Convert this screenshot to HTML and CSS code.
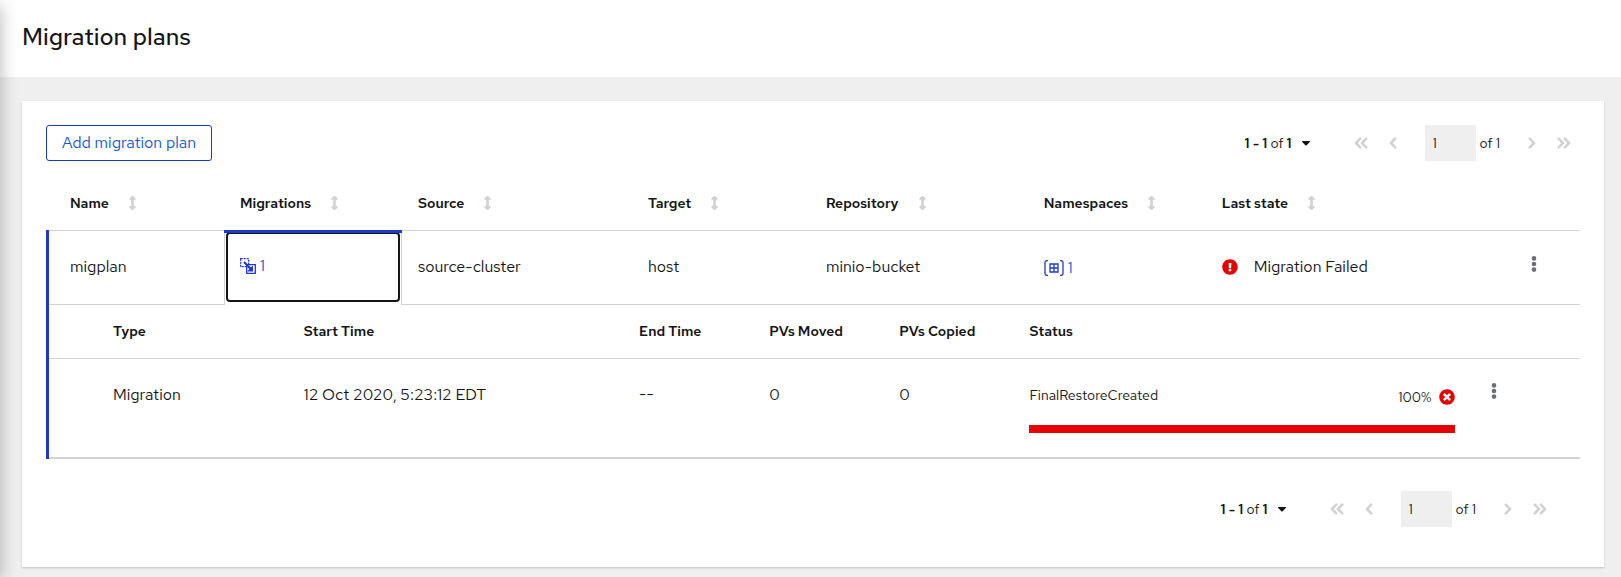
FILE: index.html
```html
<!DOCTYPE html>
<html lang="en">
<head>
<meta charset="utf-8">
<title>Migration plans</title>
<link rel="stylesheet" href="styles.css">
</head>
<body>
<svg class="defs" aria-hidden="true">
  <symbol id="sort" viewBox="0 0 256 512"><path d="M214.059 377.941H168V134.059h46.059c21.382 0 32.09-25.851 16.971-40.971L144.97 7.029c-9.373-9.373-24.568-9.373-33.941 0L24.971 93.088c-15.119 15.119-4.411 40.971 16.971 40.971H88v243.882H41.941c-21.382 0-32.09 25.851-16.971 40.971l86.059 86.059c9.373 9.373 24.568 9.373 33.941 0l86.059-86.059c15.12-15.119 4.412-40.971-16.97-40.971z"/></symbol>
  <symbol id="kebab" viewBox="0 0 6 16"><circle cx="3" cy="2.4" r="2.3"/><circle cx="3" cy="8" r="2.3"/><circle cx="3" cy="13.6" r="2.3"/></symbol>
  <symbol id="left" viewBox="0 0 8 12"><path class="stroke" d="M6.2 1.6 2 6l4.200 4.400"/></symbol>
  <symbol id="right" viewBox="0 0 8 12"><path class="stroke" d="M1.800 1.600 6 6l-4.200 4.400"/></symbol>
  <symbol id="first" viewBox="0 0 14 12"><path class="stroke" d="M6.200 1.600 2 6l4.200 4.400M12.200 1.600 8 6l4.200 4.400"/></symbol>
  <symbol id="last" viewBox="0 0 14 12"><path class="stroke" d="M1.800 1.600 6 6l-4.200 4.400M7.800 1.600 12 6l-4.200 4.400"/></symbol>
  <symbol id="caret" viewBox="0 0 8 5"><path d="M.6 0h6.800c.5 0 .8.600.4 1L4.400 4.600c-.2.200-.600.200-.8 0L.2 1c-.4-.4-.1-1 .4-1z"/></symbol>
</svg>

<header class="page-header"><h1>Migration plans</h1></header>

<main class="page-main">
  <section class="card">
    <div class="toolbar">
      <button class="add-button" type="button">Add migration plan</button>
      <nav class="pagination" aria-label="Top pagination">
        <button class="range" type="button"><span><b>1 - 1</b> of <b>1</b></span><svg class="caret"><use href="#caret"/></svg></button>
        <button class="nav-button wide" type="button" disabled aria-label="First page"><svg class="double"><use href="#first"/></svg></button>
        <button class="nav-button" type="button" disabled aria-label="Previous page"><svg class="single"><use href="#left"/></svg></button>
        <label class="page-field"><input type="text" value="1" aria-label="Current page"><span>of 1</span></label>
        <button class="nav-button" type="button" disabled aria-label="Next page"><svg class="single"><use href="#right"/></svg></button>
        <button class="nav-button wide" type="button" disabled aria-label="Last page"><svg class="double"><use href="#last"/></svg></button>
      </nav>
    </div>

    <table class="plans">
      <colgroup><col class="c-std"><col class="c-std"><col class="c-source"><col class="c-std"><col class="c-repo"><col class="c-std"><col><col class="c-action"></colgroup>
      <thead>
        <tr>
          <th><button type="button">Name<svg class="sort"><use href="#sort"/></svg></button></th>
          <th><button type="button">Migrations<svg class="sort"><use href="#sort"/></svg></button></th>
          <th><button type="button">Source<svg class="sort"><use href="#sort"/></svg></button></th>
          <th><button type="button">Target<svg class="sort"><use href="#sort"/></svg></button></th>
          <th><button type="button">Repository<svg class="sort"><use href="#sort"/></svg></button></th>
          <th><button type="button">Namespaces<svg class="sort"><use href="#sort"/></svg></button></th>
          <th><button type="button">Last state<svg class="sort"><use href="#sort"/></svg></button></th>
          <td></td>
        </tr>
      </thead>
      <tbody>
        <tr class="plan">
          <td class="accent">migplan</td>
          <td class="open">
            <button class="count focused" type="button">
              <svg class="icon" viewBox="0 0 16 16"><path class="line" stroke-dasharray="2 1" d="M.7.7h8v8h-8z"/><path class="cover" d="M6.700 6.700h8.600v8.600H6.700z"/><path d="M3.300 4.700 4.700 3.300l6 6L13 7.800v5.700H7.300l2-2.500z"/></svg><span>1</span>
            </button>
          </td>
          <td>source-cluster</td>
          <td>host</td>
          <td>minio-bucket</td>
          <td class="namespaces">
            <a class="count" href="#namespaces">
              <svg class="icon namespace" viewBox="0 0 20 16"><path class="line" d="M4 .7H3Q1 .7 1 3v10q0 2.300 2 2.300h1M16 .7h1q2 0 2 2.300v10q0 2.300-2 2.300h-1M6 4h8v8H6zM10 4v8M6 8h8"/></svg><span>1</span>
            </a>
          </td>
          <td>
            <span class="state"><svg class="icon danger" viewBox="0 0 512 512"><path d="M504 256c0 136.997-111.043 248-248 248S8 392.997 8 256C8 119.083 119.043 8 256 8s248 111.083 248 248zm-248 50c-25.405 0-46 20.595-46 46s20.595 46 46 46 46-20.595 46-46-20.595-46-46-46zm-43.673-165.346l7.418 136c.347 6.364 5.609 11.346 11.982 11.346h48.546c6.373 0 11.635-4.982 11.982-11.346l7.418-136c.375-6.874-5.098-12.654-11.982-12.654h-63.383c-6.884 0-12.356 5.780-11.981 12.654z"/></svg>Migration Failed</span>
          </td>
          <td class="action"><button class="kebab" type="button" aria-label="Plan actions"><svg><use href="#kebab"/></svg></button></td>
        </tr>
        <tr>
          <td class="details accent" colspan="8">
            <table class="history">
              <colgroup><col class="h-type"><col class="h-start"><col class="h-num"><col class="h-num"><col class="h-num"><col class="h-status"><col></colgroup>
              <thead><tr><th>Type</th><th>Start Time</th><th>End Time</th><th>PVs Moved</th><th>PVs Copied</th><th>Status</th><td></td></tr></thead>
              <tbody>
                <tr>
                  <td>Migration</td>
                  <td>12 Oct 2020, 5:23:12 EDT</td>
                  <td>--</td>
                  <td>0</td>
                  <td>0</td>
                  <td>
                    <div class="progress">
                      <div class="progress-head">
                        <span id="step">FinalRestoreCreated</span>
                        <span class="measure">100%<svg class="icon danger" viewBox="0 0 512 512"><path d="M256 8C119 8 8 119 8 256s111 248 248 248 248-111 248-248S393 8 256 8zm121.600 313.100c4.700 4.700 4.700 12.300 0 17L338 377.600c-4.700 4.700-12.300 4.700-17 0L256 312l-65.100 65.600c-4.700 4.700-12.300 4.700-17 0L134.400 338c-4.700-4.700-4.700-12.300 0-17l65.600-65-65.600-65.100c-4.700-4.700-4.700-12.300 0-17l39.600-39.600c4.700-4.700 12.300-4.700 17 0l65 65.700 65.100-65.600c4.700-4.700 12.300-4.700 17 0l39.600 39.600c4.700 4.700 4.700 12.300 0 17L312 256l65.600 65.100z"/></svg></span>
                      </div>
                      <div class="track" role="progressbar" aria-labelledby="step" aria-valuenow="100" aria-valuemin="0" aria-valuemax="100"><div class="fill" style="width: 100%"></div></div>
                    </div>
                  </td>
                  <td class="history-action"><button class="kebab" type="button" aria-label="Migration actions"><svg><use href="#kebab"/></svg></button></td>
                </tr>
              </tbody>
            </table>
          </td>
        </tr>
      </tbody>
    </table>

    <div class="footer">
      <nav class="pagination" aria-label="Bottom pagination">
        <button class="range" type="button"><span><b>1 - 1</b> of <b>1</b></span><svg class="caret"><use href="#caret"/></svg></button>
        <button class="nav-button wide" type="button" disabled aria-label="First page"><svg class="double"><use href="#first"/></svg></button>
        <button class="nav-button" type="button" disabled aria-label="Previous page"><svg class="single"><use href="#left"/></svg></button>
        <label class="page-field"><input type="text" value="1" aria-label="Current page"><span>of 1</span></label>
        <button class="nav-button" type="button" disabled aria-label="Next page"><svg class="single"><use href="#right"/></svg></button>
        <button class="nav-button wide" type="button" disabled aria-label="Last page"><svg class="double"><use href="#last"/></svg></button>
      </nav>
    </div>
  </section>
</main>
</body>
</html>
```

FILE: styles.css
```css
:root {
  --text: #151515;
  --blue: #1f38cc;
  --link: #1257d6;
  --line: #d2d2d2;
  --muted: #d2d2d2;
  --surface: #efefef;
  --danger: #e60000;
}

* { box-sizing: border-box; }

body {
  position: relative;
  margin: 0;
  min-height: 100vh;
  overflow-x: hidden;
  background: var(--surface);
  color: var(--text);
  font: 16px/24px "Red Hat Text", Lato, "Open Sans", sans-serif;
}

/* Shadow cast by the sidebar over the left edge */
body::before {
  content: "";
  position: absolute;
  z-index: 1;
  top: 8px;
  bottom: 0;
  left: -16px;
  width: 16px;
  box-shadow: 0 0 16px 2px rgba(3, 3, 3, 0.24);
}

button, input { font: inherit; color: inherit; }
button { padding: 0; border: 0; background: none; }
svg { display: block; flex: none; fill: currentColor; }
b { font-weight: 600; }
.defs { position: absolute; width: 0; height: 0; }
.stroke { fill: none; stroke: currentColor; stroke-width: 2.6; stroke-linecap: round; stroke-linejoin: round; }
.line { fill: none; stroke: currentColor; stroke-width: 1.3; }
.cover { fill: #fff; stroke: currentColor; stroke-width: 1.3; }

.page-header { padding: 20px 22px 24px; background: #fff; }
h1 { margin: 0; font-size: 24px; line-height: 33px; font-weight: 500; }

.page-main { padding: 24px 17px 10px 22px; }
.card {
  padding: 24px 24px 40px;
  background: #fff;
  box-shadow: 0 1px 2px rgba(3, 3, 3, 0.2);
}

.toolbar { display: flex; justify-content: space-between; align-items: center; margin-bottom: 16px; }
.add-button {
  padding: 5px 15px;
  border: 1px solid var(--blue);
  border-radius: 3px;
  color: var(--link);
}

.pagination { display: flex; align-items: center; gap: 4px; font-size: 14px; }
.range { display: flex; align-items: center; gap: 10px; margin-right: 31px; }
.caret { width: 8px; height: 5px; }
.nav-button { display: flex; justify-content: center; width: 24px; color: var(--muted); }
.nav-button.wide { width: 32px; }
.single { width: 8px; height: 12px; }
.double { width: 14px; height: 12px; }
.page-field { display: flex; align-items: center; gap: 4px; margin: 0 16px; }
.page-field input { width: 51px; height: 36px; padding: 0 8px; border: 0; background: var(--surface); }

table { width: 100%; table-layout: fixed; border-spacing: 0; }
th { font-size: 14px; font-weight: 600; text-align: left; }
th, td { padding: 0 16px; }
th button { display: flex; align-items: center; gap: 20px; font-weight: 600; }
.sort { width: 7px; height: 14px; color: var(--muted); stroke: currentColor; stroke-width: 20px; }

.c-std { width: 11.6%; }
.c-source { width: 15%; }
.c-repo { width: 14.2%; }
.c-action { width: 6%; }

.plans > thead th { height: 53px; padding-bottom: 2px; }
.plans > thead th:first-child { padding-left: 24px; }
.plan > td {
  height: 75px;
  padding-bottom: 2px;
  border-top: 1px solid var(--line);
  border-bottom: 1px solid var(--line);
}
.plan > .namespaces { padding-bottom: 0; }
.accent { position: relative; }
.accent::before {
  content: "";
  position: absolute;
  top: -1px;
  bottom: -1px;
  left: 0;
  width: 3px;
  background: var(--blue);
}
.plan > .accent { padding-left: 24px; }
.plan > .open {
  padding: 1px 1px 3px;
  border: solid var(--line);
  border-width: 1px 1px 0;
  position: relative;
}
.open::before {
  content: "";
  position: absolute;
  top: -1px;
  left: -1px;
  right: -1px;
  height: 3px;
  background: var(--blue);
}
.count { display: flex; align-items: center; gap: 4px; color: var(--link); text-decoration: none; }
.count .icon { color: var(--blue); }
.focused { width: 100%; height: 70px; padding: 0 12px 2px; border: 2px solid var(--text); border-radius: 4px; }
.icon { width: 16px; height: 16px; }
.namespace { width: 20px; }
.danger { color: var(--danger); }
.state { display: flex; align-items: center; gap: 16px; }

.kebab { display: block; color: #6a6e73; }
.kebab svg { width: 6px; height: 16px; }
.plan > .action { padding: 0 43px 8px 0; }
.action .kebab { margin-left: auto; }

.plans .details { padding: 0 0 0 3px; border-bottom: 2px solid var(--line); }
.details.accent::before { bottom: -2px; }
.h-type { width: 15.6%; }
.h-start { width: 21.9%; }
.h-num { width: 8.5%; }
.h-status { width: 29.9%; }
.history th, .history thead td { height: 54px; padding-bottom: 1px; border-bottom: 1px solid var(--line); }
.history tbody td { padding-top: 24px; padding-bottom: 24px; vertical-align: top; }
.history th:first-child, .history td:first-child { padding-left: 64px; }
.progress-head { display: flex; justify-content: space-between; margin-bottom: 16px; font-size: 14px; }
.measure { display: flex; align-items: center; gap: 8px; padding-top: 2px; }
.track { height: 8px; background: var(--line); }
.fill { height: 100%; background: var(--danger); }
.history-action .kebab { padding-left: 4px; }

.footer { display: flex; justify-content: flex-end; padding: 32px 24px 0 0; }
```
